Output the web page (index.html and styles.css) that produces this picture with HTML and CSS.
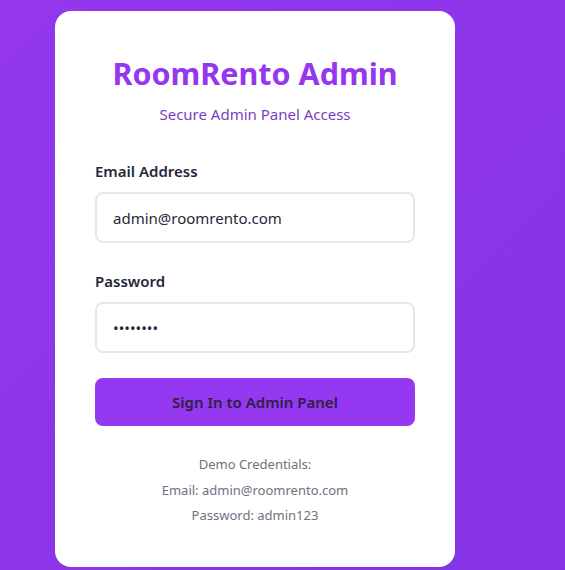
FILE: index.html
```html
<!DOCTYPE html>
<html lang="en">
<head>
<meta charset="utf-8">
<title>RoomRento Admin</title>
<link rel="stylesheet" href="styles.css">
</head>
<body>
<main class="page">
  <section class="card">
    <h1 class="title">RoomRento Admin</h1>
    <p class="subtitle">Secure Admin Panel Access</p>
    <form class="form">
      <div class="field">
        <label class="label" for="email">Email Address</label>
        <input class="input" id="email" type="email" value="admin@roomrento.com">
      </div>
      <div class="field">
        <label class="label" for="password">Password</label>
        <input class="input" id="password" type="password" value="admin123">
      </div>
      <button class="btn" type="button">Sign In to Admin Panel</button>
    </form>
    <div class="demo">
      <p class="demo-line">Demo Credentials:</p>
      <p class="demo-line">Email: admin@roomrento.com</p>
      <p class="demo-line">Password: admin123</p>
    </div>
  </section>
</main>
</body>
</html>
```
FILE: styles.css
```css
* { box-sizing: border-box; }
html, body { margin: 0; padding: 0; }
body {
  font-family: "Noto Sans", "Open Sans", sans-serif;
  background: linear-gradient(135deg, #9437ef 0%, #8533e3 100%);
  min-height: 570px;
}
.page {
  padding: 11px 0 0 55px;
}
.card {
  width: 400px;
  background: #ffffff;
  border-radius: 16px;
  padding: 40px 40px 38px;
}
.title {
  margin: 0;
  text-align: center;
  font-size: 30.5px;
  line-height: 44px;
  font-weight: 700;
  color: #9636ee;
}
.subtitle {
  margin: 8px 0 0;
  text-align: center;
  font-size: 15px;
  line-height: 22px;
  color: #7e3cc4;
}
.form {
  margin-top: 34px;
}
.field {
  margin-bottom: 26px;
}
.label {
  display: block;
  font-size: 15px;
  line-height: 24px;
  font-weight: 600;
  color: #1f2937;
  margin-bottom: 9px;
}
.input {
  display: block;
  width: 100%;
  height: 51px;
  padding: 0 16px;
  border: 2px solid #e5e7eb;
  border-radius: 8px;
  font-family: inherit;
  font-size: 15px;
  color: #1f2937;
  background: #fff;
  outline: none;
}
.btn {
  display: block;
  width: 100%;
  height: 48px;
  margin-top: -1px;
  border: none;
  border-radius: 8px;
  background: #9538f2;
  color: #2f1f3f;
  font-family: inherit;
  font-size: 15px;
  font-weight: 600;
}
.demo {
  margin-top: 26px;
  text-align: center;
}
.demo-line {
  margin: 0;
  font-size: 13px;
  line-height: 25.5px;
  color: #6b7280;
}
```
